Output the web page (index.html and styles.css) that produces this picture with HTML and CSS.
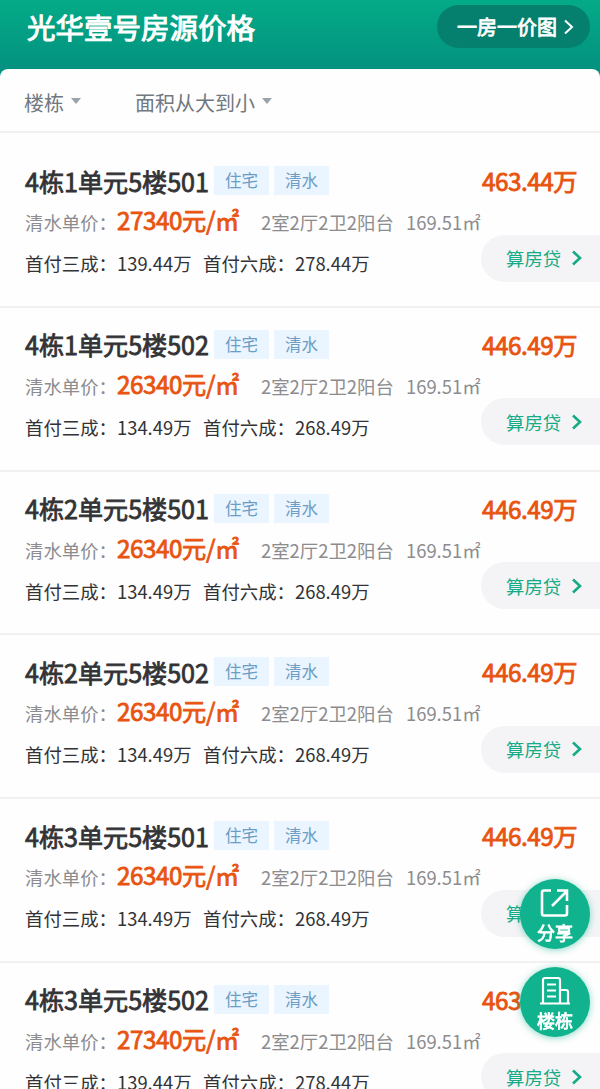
FILE: index.html
```html
<!DOCTYPE html>
<html lang="zh-CN">
<head>
  <meta charset="UTF-8" />
  <meta name="viewport" content="width=device-width, initial-scale=1.0"/>
  <title>光华壹号房源价格</title>
  <link rel="stylesheet" href="styles.css">
</head>
<body>

  <header>
    <h1>光华壹号房源价格</h1>
    <a class="chart-btn" href="#">
      一房一价图
      <svg width="10" height="16" viewBox="0 0 10 16"><path d="M1 1.5l7 6.5-7 6.5"/></svg>
    </a>
  </header>

  <main>
    <div class="filters">
      <div class="filter">楼栋<span class="caret"></span></div>
      <div class="filter">面积从大到小<span class="caret"></span></div>
    </div>

    <div id="houseList"></div>
  </main>

  <div class="float-btns">
    <a class="float-btn" href="#">
      <svg width="30" height="30" viewBox="0 0 30 30">
        <path d="M11 2.500H4q-2 0-2 2v21q0 2 2 2h21q2 0 2-2V17"/>
        <path d="M12 18L26 4M17 2.500h10V13"/>
      </svg>
      <span>分享</span>
    </a>
    <a class="float-btn" href="#">
      <svg class="thin" width="30" height="30" viewBox="0 0 30 30">
        <path d="M0 27.500h30M3 27V4q0-2 2-2h13q2 0 2 2v23M20 14h6q2 0 2 2v11"/>
        <path d="M7 8.500h9M7 14.500h9M7 20.500h9"/>
      </svg>
      <span>楼栋</span>
    </a>
  </div>

  <script>
    const list = document.getElementById("houseList");

    const houses = [
      { name: "4栋1单元5楼501", price: 27340, total: "463.44", pay3: "139.44", pay6: "278.44" },
      { name: "4栋1单元5楼502", price: 26340, total: "446.49", pay3: "134.49", pay6: "268.49" },
      { name: "4栋2单元5楼501", price: 26340, total: "446.49", pay3: "134.49", pay6: "268.49" },
      { name: "4栋2单元5楼502", price: 26340, total: "446.49", pay3: "134.49", pay6: "268.49" },
      { name: "4栋3单元5楼501", price: 26340, total: "446.49", pay3: "134.49", pay6: "268.49" },
      { name: "4栋3单元5楼502", price: 27340, total: "463.44", pay3: "139.44", pay6: "278.44" }
    ];

    houses.forEach(house => {
      const item = document.createElement("div");
      item.className = "house";
      item.innerHTML = `
        <div class="line title-line">
          <h2>${house.name}</h2>
          <span class="tag">住宅</span>
          <span class="tag">清水</span>
          <strong class="total">${house.total}万</strong>
        </div>
        <div class="line price-line">
          <span class="label">清水单价：</span>
          <strong class="price">${house.price}元/㎡</strong>
          <span class="layout">2室2厅2卫2阳台</span>
          <span class="area">169.51㎡</span>
        </div>
        <div class="line pay-line">
          <span class="label">首付三成：</span>
          <span class="pay">${house.pay3}万</span>
          <span class="label">首付六成：</span>
          <span>${house.pay6}万</span>
          <a class="loan-btn" href="#">算房贷<svg width="10" height="16" viewBox="0 0 10 16"><path d="M1 1.5l7 6.5-7 6.5"/></svg></a>
        </div>
      `;
      list.appendChild(item);
    });
  </script>

</body>
</html>
```
FILE: styles.css
```css
* {
  box-sizing: border-box;
}

body {
  font-family: "Noto Sans CJK SC", sans-serif;
  margin: 0;
  height: 1089px;
  overflow: hidden;
  background-color: #fefefe;
  color: #333336;
  white-space: nowrap;
}

a {
  text-decoration: none;
}

svg {
  fill: none;
  stroke: currentColor;
  stroke-width: 2.6;
}

svg.thin {
  stroke-width: 2.2;
}

h1, h2, .chart-btn, .total, .price, .float-btn span {
  font-weight: 400;
  -webkit-text-stroke: 0.8px currentColor;
}

header {
  display: flex;
  justify-content: space-between;
  height: 82px;
  padding: 5px 10px 0 27px;
  background: linear-gradient(#04ab88, #03917f 70px);
  color: #fff;
}

h1 {
  margin: 1px 0 0;
  font-size: 28.5px;
  line-height: 42px;
  -webkit-text-stroke-width: 1px;
}

.chart-btn {
  display: flex;
  align-items: center;
  gap: 7px;
  height: 43px;
  padding: 0 16px 0 20px;
  border-radius: 22px;
  background-color: #06806e;
  color: #fff;
  font-size: 20px;
}

.chart-btn svg {
  stroke-width: 2;
}

main {
  margin-top: -13px;
  background-color: #fefefe;
  border-radius: 8px 8px 0 0;
}

.filters {
  display: flex;
  gap: 54px;
  height: 64px;
  padding-left: 24px;
  border-bottom: 2px solid #f1f1f2;
}

.filter {
  display: flex;
  align-items: center;
  gap: 7px;
  height: 66px;
  font-size: 20px;
  color: #707880;
}

.caret {
  border: 5px solid transparent;
  border-top: 6px solid #99a3ab;
  border-bottom: 0;
  margin-top: -2px;
}

#houseList {
  padding-top: 11px;
}

.house {
  height: 163.8px;
  padding: 15px 0 0 25px;
  border-bottom: 2px solid #f1f1f2;
}

.line {
  display: flex;
  align-items: center;
}

.title-line {
  height: 43px;
}

h2 {
  width: 184px;
  margin: 0 5px 0 0;
  font-size: 25.1px;
}

.tag {
  width: 55px;
  height: 29px;
  margin-right: 5px;
  background-color: #eaf5ff;
  color: #6c9dc4;
  font-size: 16.5px;
  line-height: 29px;
  text-align: center;
}

.total {
  margin-left: auto;
  margin-right: 23px;
  color: #e8530f;
  font-size: 24.3px;
  letter-spacing: -0.5px;
}

.price-line {
  align-items: baseline;
  height: 38px;
  color: #8c8c8f;
  font-size: 18.4px;
}

.price-line .label {
  padding-top: 1px;
}

.label {
  width: 92px;
}

.price {
  width: 144px;
  color: #e8530f;
  font-size: 24.2px;
  letter-spacing: -0.4px;
}

.layout {
  width: 145px;
}

.pay-line {
  height: 46px;
  font-size: 18.4px;
}

.pay {
  width: 86px;
}

.loan-btn {
  display: flex;
  align-items: center;
  gap: 11px;
  width: 119px;
  height: 47px;
  margin-top: -10px;
  margin-left: auto;
  padding-left: 25px;
  border-radius: 24px 0 0 24px;
  background-color: #f4f4f6;
  color: #16ab86;
  font-size: 18.4px;
}

.float-btns {
  position: fixed;
  right: 10px;
  top: 879px;
  display: grid;
  gap: 18px;
}

.float-btn {
  display: flex;
  flex-direction: column;
  align-items: center;
  width: 70px;
  height: 70px;
  padding-top: 9px;
  border-radius: 50%;
  background-color: #10b38e;
  box-shadow: 0 1px 7px rgba(16, 179, 142, 0.5);
  color: #fff;
  font-size: 18px;
  line-height: 28px;
}
```
